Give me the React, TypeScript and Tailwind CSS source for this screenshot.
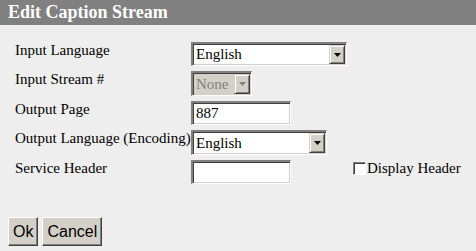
import React from "react";

const serif = { fontFamily: '"Liberation Serif", "Times New Roman", serif' };

function Arrow({ color }: { color: string }) {
  return (
    <div className="flex h-full w-[16px] items-center justify-center bg-[#d4d0c8] border-t border-l border-t-[#d4d0c8] border-l-[#d4d0c8] border-r border-b border-r-[#404040] border-b-[#404040] shadow-[inset_1px_1px_0_#ffffff,inset_-1px_-1px_0_#808080]">
      <svg width="7" height="4" viewBox="0 0 7 4"><path d="M0 0h7L3.5 4z" fill={color} /></svg>
    </div>
  );
}

function Select({ w, value, disabled }: { w: string; value: string; disabled?: boolean }) {
  return (
    <div
      className={`${w} h-full flex items-stretch border-t-2 border-l-2 border-t-[#808080] border-l-[#808080] border-b border-r border-b-[#ffffff] border-r-[#ffffff] shadow-[inset_1px_1px_0_#404040,inset_-1px_-1px_0_#d4d0c8] p-[1px] ${disabled ? "bg-[#d4d0c8]" : "bg-white"}`}
    >
      <div className={`flex-1 pl-[2px] flex items-center text-[15px] ${disabled ? "text-[#808080]" : "text-black"}`} style={serif}>
        {value}
      </div>
      <Arrow color={disabled ? "#808080" : "#000000"} />
    </div>
  );
}

function TextBox({ value }: { value: string }) {
  return (
    <div className="w-[100px] h-full bg-white border-t-2 border-l-2 border-t-[#808080] border-l-[#808080] border-b border-r border-b-[#ffffff] border-r-[#ffffff] shadow-[inset_1px_1px_0_#404040,inset_-1px_-1px_0_#d4d0c8] pl-[3px] flex items-center text-[15px] text-black" style={serif}>
      {value}
    </div>
  );
}

function Row({ label, h, children }: { label: string; h: string; children: React.ReactNode }) {
  return (
    <div className={`flex ${h}`}>
      <div className="w-[176px] text-[15px] leading-[17px] text-black whitespace-nowrap" style={serif}>{label}</div>
      {children}
    </div>
  );
}

function Button({ children }: { children: React.ReactNode }) {
  return (
    <div className="h-[29px] px-[4px] flex items-center bg-[#d4d0c8] border-t border-l border-t-[#ffffff] border-l-[#ffffff] border-r border-b border-r-[#404040] border-b-[#404040] shadow-[inset_-1px_-1px_0_#808080] text-[16px] text-black" style={{ fontFamily: '"Liberation Sans", Arial, sans-serif' }}>
      {children}
    </div>
  );
}

export default function App() {
  return (
    <div className="w-[476px] h-[251px] bg-[#eeeeee] flex flex-col">
      <div className="h-[25px] bg-[#808080] pl-[8px] flex items-center text-white text-[18px] font-bold" style={serif}>
        Edit Caption Stream
      </div>
      <div className="pl-[15px] pt-[17px] flex flex-col gap-[5px]">
        <Row label="Input Language" h="h-[24px]">
          <Select w="w-[156px]" value="English" />
        </Row>
        <Row label="Input Stream #" h="h-[25px]">
          <Select w="w-[61px]" value="None" disabled />
        </Row>
        <Row label="Output Page" h="h-[24px]">
          <TextBox value="887" />
        </Row>
        <Row label="Output Language (Encoding)" h="h-[25px]">
          <Select w="w-[136px]" value="English" />
        </Row>
        <Row label="Service Header" h="h-[24px]">
          <TextBox value="" />
          <div className="ml-[62px] flex items-start">
            <div className="mt-[2px] w-[13px] h-[13px] bg-white border border-t-[#808080] border-l-[#808080] border-b-[#ffffff] border-r-[#ffffff] shadow-[inset_1px_1px_0_#404040]" />
            <span className="ml-[1px] text-[15px] leading-[17px] text-black" style={serif}>Display Header</span>
          </div>
        </Row>
      </div>
      <div className="mt-auto mb-[5px] pl-[8px] flex gap-[4px]">
        <Button>Ok</Button>
        <Button>Cancel</Button>
      </div>
    </div>
  );
}
